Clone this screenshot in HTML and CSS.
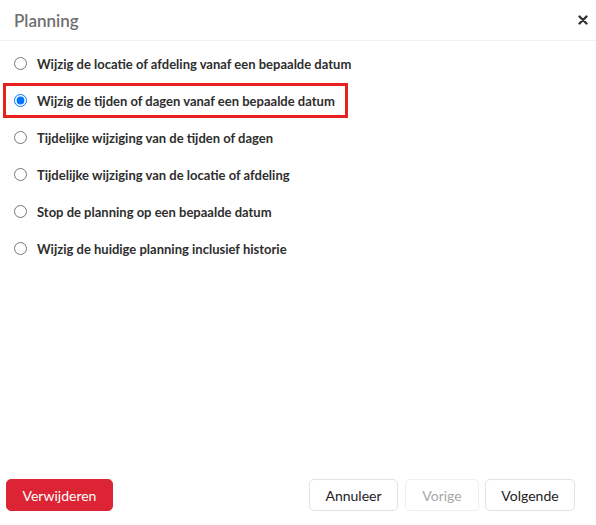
FILE: index.html
```html
<!DOCTYPE html>
<html lang="nl">
<head>
    <meta charset="UTF-8">
    <title>Planning</title>
    <link rel="stylesheet" href="styles.css">
</head>
<body>
<div class="modal">
    <div class="modal-header">
        <h2>Planning</h2>
        <button class="close" aria-label="Sluiten">
            <svg width="10" height="10" viewBox="0 0 10 10">
                <path d="M1.5 1.5 L8.5 8.5 M8.5 1.5 L1.5 8.5" stroke="#333" stroke-width="2.4" stroke-linecap="round"/>
            </svg>
        </button>
    </div>

    <div class="modal-body">
        <label class="option">
            <input type="radio" name="choice">
            <span>Wijzig de locatie of afdeling vanaf een bepaalde datum</span>
        </label>
        <label class="option highlight">
            <input type="radio" name="choice" checked>
            <span>Wijzig de tijden of dagen vanaf een bepaalde datum</span>
        </label>
        <label class="option">
            <input type="radio" name="choice">
            <span>Tijdelijke wijziging van de tijden of dagen</span>
        </label>
        <label class="option">
            <input type="radio" name="choice">
            <span>Tijdelijke wijziging van de locatie of afdeling</span>
        </label>
        <label class="option">
            <input type="radio" name="choice">
            <span>Stop de planning op een bepaalde datum</span>
        </label>
        <label class="option">
            <input type="radio" name="choice">
            <span>Wijzig de huidige planning inclusief historie</span>
        </label>
    </div>

    <div class="modal-footer">
        <button class="btn btn-danger">Verwijderen</button>
        <div class="right">
            <button class="btn btn-light">Annuleer</button>
            <button class="btn btn-light" disabled>Vorige</button>
            <button class="btn btn-light">Volgende</button>
        </div>
    </div>
</div>
</body>
</html>
```

FILE: styles.css
```css
* {
    box-sizing: border-box;
}

body {
    margin: 0;
    font-family: 'Lato', sans-serif;
    background: #fff;
    color: #2b2b2b;
}

.modal {
    height: 525px;
    display: flex;
    flex-direction: column;
}

.modal-header {
    height: 41px;
    display: flex;
    align-items: center;
    justify-content: space-between;
    padding: 0 8px 0 14px;
    border-bottom: 1px solid #f2f2f2;
}

.modal-header h2 {
    margin: 0;
    font-size: 17px;
    font-weight: 600;
    color: #6f6f6f;
}

.close {
    border: none;
    background: none;
    padding: 0;
    width: 10px;
    height: 10px;
    display: flex;
    cursor: pointer;
}

.modal-body {
    padding-top: 4px;
}

.option {
    display: flex;
    align-items: center;
    height: 37px;
    padding-left: 14px;
    font-size: 13px;
    font-weight: 700;
    color: #2e2e2e;
    cursor: pointer;
}

.option input {
    margin: 0 10px 0 0;
    width: 13px;
    height: 13px;
}

.option.highlight {
    height: 35px;
    width: 345px;
    margin: 1px 0 1px 3px;
    padding-left: 8px;
    border: 3px solid #e8211f;
}

.modal-footer {
    margin-top: auto;
    display: flex;
    justify-content: space-between;
    align-items: center;
    padding: 0 21px 14px 6px;
}

.right {
    display: flex;
    gap: 6px;
}

.btn {
    height: 32px;
    padding: 0 14px;
    border-radius: 5px;
    font-family: 'Lato', sans-serif;
    font-size: 14px;
    cursor: pointer;
}

.btn-danger {
    width: 107px;
    background: #dc2434;
    border: 1px solid #dc2434;
    color: #fff;
}

.btn-light {
    background: #fff;
    border: 1px solid #e2e2e6;
    color: #222;
}

.btn-light:nth-child(1) {
    width: 89px;
}

.btn-light:nth-child(2) {
    width: 74px;
    margin-left: 1px;
}

.btn-light:nth-child(3) {
    width: 90px;
}

.btn-light:disabled {
    color: #a8a8a8;
    border-color: #efeff2;
    cursor: default;
}
```
